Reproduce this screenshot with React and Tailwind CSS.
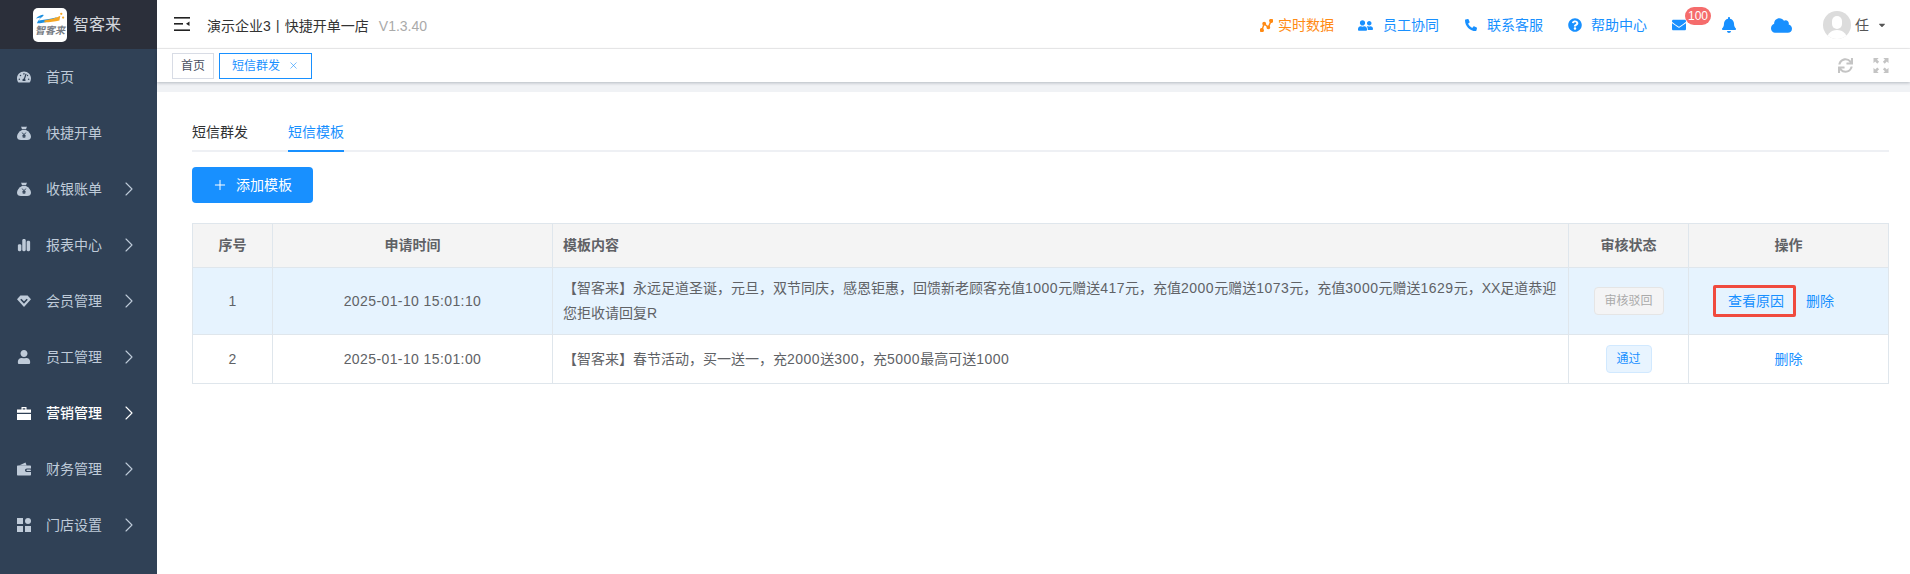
import React from "react";
import { ChevronRight, X, Plus } from "lucide-react";
import {
  FaTachometerAlt,
  FaUser,
  FaUserFriends,
  FaPhoneAlt,
  FaQuestionCircle,
  FaEnvelope,
  FaBell,
  FaCloud,
  FaCaretDown,
  FaSync,
} from "react-icons/fa";
import { FaChartSimple } from "react-icons/fa6";

const font = "font-['Liberation_Sans','Noto_Sans_CJK_SC',sans-serif]";

function SackIcon({ className }) {
  return (
    <svg viewBox="0 0 14 14" className={className} fill="currentColor">
      <path d="M4 0.5 C5 1.2 6 0.4 7 0.8 C8 0.4 9 1.2 10 0.5 L9 3.2 L5 3.2 Z" />
      <path d="M5 4 L9 4 C12 5.5 14 8 14 10.5 C14 13 12.5 14 10 14 L4 14 C1.5 14 0 13 0 10.5 C0 8 2 5.5 5 4 Z" />
      <path d="M5.2 6.6 L7 8.8 L8.8 6.6 M7 8.8 L7 12 M5.4 9.4 L8.6 9.4 M5.4 10.8 L8.6 10.8" stroke="#304156" strokeWidth="1" fill="none" />
    </svg>
  );
}

function GemIcon({ className }) {
  return (
    <svg viewBox="0 0 14 14" className={className} fill="currentColor">
      <path d="M3.4 1.5 L10.6 1.5 L14 5.2 L7 13 L0 5.2 Z" />
      <path d="M3.8 5.2 L7 8.6 L10.2 5.2" stroke="#304156" strokeWidth="1.6" fill="none" />
    </svg>
  );
}

function BriefcaseIcon({ className }) {
  return (
    <svg viewBox="0 0 14 14" className={className} fill="currentColor">
      <path d="M4.5 1 L9.5 1 L9.5 3.4 L14 3.4 L14 6.8 L0 6.8 L0 3.4 L4.5 3.4 Z M5.7 2.2 L5.7 3.4 L8.3 3.4 L8.3 2.2 Z" fillRule="evenodd" />
      <rect x="0" y="8" width="14" height="6" />
    </svg>
  );
}

function WalletIcon({ className }) {
  return (
    <svg viewBox="0 0 14 14" className={className} fill="currentColor">
      <path d="M2 3.4 L8.5 0.6 L9.6 3.4 Z" />
      <path d="M0 4.6 C0 4 0.4 3.6 1 3.6 L13 3.6 C13.6 3.6 14 4 14 4.6 L14 6.4 L10 6.4 C8.6 6.4 8 7.4 8 8.2 C8 9.2 8.8 10 10 10 L14 10 L14 12.4 C14 13 13.6 13.4 13 13.4 L1 13.4 C0.4 13.4 0 13 0 12.4 Z" />
      <rect x="9.4" y="7.4" width="4.6" height="1.6" rx="0.8" />
    </svg>
  );
}

function GridIcon({ className }) {
  return (
    <svg viewBox="0 0 14 14" className={className} fill="currentColor">
      <rect x="0" y="0" width="6" height="6" />
      <circle cx="11" cy="3" r="3" />
      <rect x="0" y="8" width="6" height="6" />
      <rect x="8" y="8" width="6" height="6" />
    </svg>
  );
}

function TrendIcon({ className }) {
  return (
    <svg viewBox="0 0 14 14" className={className} fill="none" stroke="currentColor" strokeWidth="1.5">
      <path d="M2 12 L4.5 5 L9 9 L12 2" />
      <circle cx="2" cy="12" r="1.5" fill="currentColor" />
      <circle cx="4.5" cy="5" r="1.3" fill="currentColor" />
      <circle cx="9" cy="9" r="1.3" fill="currentColor" />
      <circle cx="12" cy="2" r="1.5" fill="currentColor" />
    </svg>
  );
}

function ExpandIcon({ className }) {
  return (
    <svg viewBox="0 0 16 16" className={className} fill="currentColor">
      <path d="M0 0 L5.5 0 L3.8 1.8 L6 4 L4 6 L1.8 3.8 L0 5.5 Z" />
      <path d="M16 0 L16 5.5 L14.2 3.8 L12 6 L10 4 L12.2 1.8 L10.5 0 Z" />
      <path d="M0 16 L0 10.5 L1.8 12.2 L4 10 L6 12 L3.8 14.2 L5.5 16 Z" />
      <path d="M16 16 L10.5 16 L12.2 14.2 L10 12 L12 10 L14.2 12.2 L16 10.5 Z" />
    </svg>
  );
}

const navItems = [
  { label: "首页", icon: FaTachometerAlt },
  { label: "快捷开单", icon: SackIcon },
  { label: "收银账单", icon: SackIcon, arrow: true },
  { label: "报表中心", icon: FaChartSimple, arrow: true },
  { label: "会员管理", icon: GemIcon, arrow: true },
  { label: "员工管理", icon: FaUser, arrow: true },
  { label: "营销管理", icon: BriefcaseIcon, arrow: true, active: true },
  { label: "财务管理", icon: WalletIcon, arrow: true },
  { label: "门店设置", icon: GridIcon, arrow: true },
];

const Logo = () => (
  <div className="w-[34px] h-[34px] rounded-[5px] bg-white flex flex-col items-center justify-start pt-[3px] overflow-hidden">
    <svg viewBox="0 0 34 16" className="w-[32px] h-[15px] shrink-0">
      <path d="M2 8 C6 4 11 3 10 5 C8 7 6 8 5 10 C12 9 20 8 26 6 C19 10 12 13 3 13 C4 11 6 8 7 7 C5 7 4 8 2 8 Z" fill="#1c8fe0" />
      <path d="M11 10 C18 9 24 7 28 5 L27 10 C22 11 17 12 11 12 Z" fill="#f5a623" />
      <circle cx="29" cy="3" r="1.2" fill="#f5a623" />
      <circle cx="31" cy="7" r="1.2" fill="#f5a623" />
    </svg>
    <span className="mt-[-1px] text-[10px] leading-[12px] text-[#777c84] italic font-bold whitespace-nowrap">智客来</span>
  </div>
);

const Sidebar = () => (
  <aside className="w-[157px] h-full shrink-0 bg-[#304156] flex flex-col">
    <div className="h-[49px] shrink-0 bg-[#2b2f3a] flex items-center pl-[33px] gap-[6px]">
      <Logo />
      <span className="text-[16px] text-[#d3d6dc]">智客来</span>
    </div>
    <nav className="flex flex-col">
      {navItems.map((item) => {
        const Icon = item.icon;
        return (
          <div
            key={item.label}
            className={`h-[56px] shrink-0 flex items-center pl-[17px] text-[14px] ${
              item.active ? "text-white font-medium" : "text-[#bfcbd9]"
            }`}
          >
            <Icon className="w-[14px] h-[14px] mr-[15px] shrink-0" />
            <span className="w-[56px] shrink-0">{item.label}</span>
            {item.arrow && <ChevronRight className="w-[24px] h-[24px] ml-[15px] shrink-0" strokeWidth={1.1} />}
          </div>
        );
      })}
    </nav>
  </aside>
);

const TopLink = ({ icon: Icon, label, className, iconClass }) => (
  <div className={`flex items-center text-[14px] ${className}`}>
    <Icon className={iconClass} />
    <span>{label}</span>
  </div>
);

const TopBar = () => (
  <header className="h-[49px] shrink-0 flex items-center bg-white pl-[17px] pr-[23px] pt-[5px] border-b border-[#f0f0f0]">
    <svg viewBox="0 0 16 14" className="w-[16px] h-[14px] mb-[5px] shrink-0" fill="#222">
      <rect x="0" y="0" width="16" height="1.6" />
      <rect x="0" y="6" width="9" height="1.6" />
      <rect x="0" y="12.4" width="16" height="1.6" />
      <path d="M15.5 4.6 L12 6.8 L15.5 9 Z" />
    </svg>
    <span className="ml-[17px] text-[14px] text-[#333]">演示企业3丨快捷开单一店</span>
    <span className="ml-[10px] text-[14px] text-[#aaa]">V1.3.40</span>
    <div className="ml-auto flex items-center mt-[-3px]">
      <TopLink icon={TrendIcon} label="实时数据" className="text-[#ff8a14]" iconClass="w-[13px] h-[13px] mr-[5px]" />
      <TopLink icon={FaUserFriends} label="员工协同" className="text-[#1890ff] ml-[24px]" iconClass="w-[15px] h-[13px] mr-[10px]" />
      <TopLink icon={FaPhoneAlt} label="联系客服" className="text-[#1890ff] ml-[26px]" iconClass="w-[12px] h-[14px] mr-[10px]" />
      <TopLink icon={FaQuestionCircle} label="帮助中心" className="text-[#1890ff] ml-[25px]" iconClass="w-[14px] h-[14px] mr-[9px]" />
      <div className="relative ml-[25px]">
        <FaEnvelope className="w-[14px] h-[14px] text-[#1890ff]" />
        <span className="absolute left-[13px] top-[-11px] w-[26px] h-[18px] rounded-full bg-[#f56c6c] text-white text-[12px] leading-[18px] text-center">
          100
        </span>
      </div>
      <FaBell className="ml-[36px] w-[14px] h-[18px] text-[#1890ff] mb-[1px]" />
      <FaCloud className="ml-[35px] w-[21px] h-[17px] text-[#1890ff]" />
      <div className="ml-[31px] w-[28px] h-[28px] rounded-full bg-[#dcdcdc] overflow-hidden relative">
        <div className="absolute left-[9px] top-[5px] w-[10px] h-[13px] rounded-full bg-white" />
        <div className="absolute left-[3px] top-[19px] w-[22px] h-[12px] rounded-t-full bg-white" />
      </div>
      <span className="ml-[4px] text-[14px] text-[#555]">任</span>
      <FaCaretDown className="ml-[8px] w-[10px] h-[10px] text-[#555]" />
    </div>
  </header>
);

const TabsBar = () => (
  <div className="h-[33px] shrink-0 bg-white flex items-center pl-[15px] pr-[21px] shadow-[0_1px_3px_rgba(0,21,41,0.25)] relative">
    <div className="h-[26px] w-[42px] border border-[#d8dce5] flex items-center justify-center text-[#495060] text-[12px]">
      首页
    </div>
    <div className="h-[26px] w-[93px] ml-[5px] border border-[#1890ff] flex items-center pl-[12px] text-[#1890ff] text-[12px]">
      短信群发
      <X className="w-[11px] h-[11px] ml-[8px]" strokeWidth={1.3} />
    </div>
    <div className="ml-auto flex items-center gap-[20px] text-[#c4c4c4]">
      <FaSync className="w-[15px] h-[15px]" />
      <ExpandIcon className="w-[16px] h-[15px]" />
    </div>
  </div>
);

const Th = ({ children, className = "" }) => (
  <th className={`border border-[#dfe6ec] font-bold text-[14px] text-[#606266] ${className}`}>{children}</th>
);
const Td = ({ children, className = "" }) => (
  <td className={`border border-[#dfe6ec] text-[14px] text-[#606266] ${className}`}>{children}</td>
);

// digits run a little wider in the reference than in Liberation Sans
const Wide = ({ text }) =>
  text.split(/(\d+)/).map((part, i) =>
    /\d/.test(part) ? (
      <span key={i} className="tracking-[0.5px]">
        {part}
      </span>
    ) : (
      part
    )
  );

const TemplateTable = () => (
  <table className="mt-[20px] w-[1697px] table-fixed border-collapse">
    <colgroup>
      <col className="w-[80px]" />
      <col className="w-[280px]" />
      <col className="w-[1016px]" />
      <col className="w-[120px]" />
      <col />
    </colgroup>
    <thead>
      <tr className="h-[44px] bg-[#f4f4f4]">
        <Th className="text-center">序号</Th>
        <Th className="text-center">申请时间</Th>
        <Th className="text-left pl-[10px]">模板内容</Th>
        <Th className="text-center">审核状态</Th>
        <Th className="text-center">操作</Th>
      </tr>
    </thead>
    <tbody>
      <tr className="h-[67px] bg-[#e6f3fe]">
        <Td className="text-center">1</Td>
        <Td className="text-center tracking-[0.4px]">2025-01-10 15:01:10</Td>
        <Td className="px-[10px] leading-[25px]">
          <div className="whitespace-nowrap">
            <Wide text="【智客来】永远足道圣诞，元旦，双节同庆，感恩钜惠，回馈新老顾客充值1000元赠送417元，充值2000元赠送1073元，充值3000元赠送1629元，XX足道恭迎" />
          </div>
          <div>您拒收请回复R</div>
        </Td>
        <Td className="text-center">
          <span className="inline-block h-[28px] w-[70px] leading-[26px] rounded-[4px] border border-[#e5e5e5] bg-[#f4f4f5] text-[#aaa] text-[12px]">
            审核驳回
          </span>
        </Td>
        <Td>
          <div className="flex items-center pl-[24px]">
            <span className="w-[83px] h-[32px] border-[3px] border-[#f04a3e] rounded-[2px] flex items-center justify-center pl-[3px] pt-[1px] text-[#1890ff]">
              查看原因
            </span>
            <span className="ml-[10px] text-[#1890ff] mt-[1px]">删除</span>
          </div>
        </Td>
      </tr>
      <tr className="h-[49px] bg-white">
        <Td className="text-center">2</Td>
        <Td className="text-center tracking-[0.4px]">2025-01-10 15:01:00</Td>
        <Td className="px-[10px]">
          <Wide text="【智客来】春节活动，买一送一，充2000送300，充5000最高可送1000" />
        </Td>
        <Td className="text-center">
          <span className="inline-block h-[28px] w-[46px] leading-[26px] rounded-[4px] border border-[#d1e9ff] bg-[#e8f4ff] text-[#1890ff] text-[12px]">
            通过
          </span>
        </Td>
        <Td className="text-center">
          <span className="text-[#1890ff]">删除</span>
        </Td>
      </tr>
    </tbody>
  </table>
);

const App = () => (
  <div className={`${font} h-[574px] w-[1910px] flex overflow-hidden bg-white`}>
    <Sidebar />
    <main className="flex-1 min-w-0 flex flex-col">
      <TopBar />
      <TabsBar />
      <div className="h-[10px] shrink-0 bg-[#f0f2f5]" />
      <section className="pl-[35px] pr-[21px] pt-[20px]">
        <div className="flex gap-[40px] border-b-2 border-[#eef0f4] h-[40px]">
          <span className="text-[14px] leading-[40px] text-[#303133]">短信群发</span>
          <span className="text-[14px] leading-[40px] text-[#1890ff] border-b-2 border-[#1890ff] h-[40px]">短信模板</span>
        </div>
        <button className="mt-[15px] h-[36px] w-[121px] rounded-[4px] bg-[#1890ff] text-white text-[14px] flex items-center justify-center gap-[8px] pr-[1px]">
          <Plus className="w-[16px] h-[16px]" strokeWidth={1.5} />
          添加模板
        </button>
        <TemplateTable />
      </section>
    </main>
  </div>
);

export default App;
